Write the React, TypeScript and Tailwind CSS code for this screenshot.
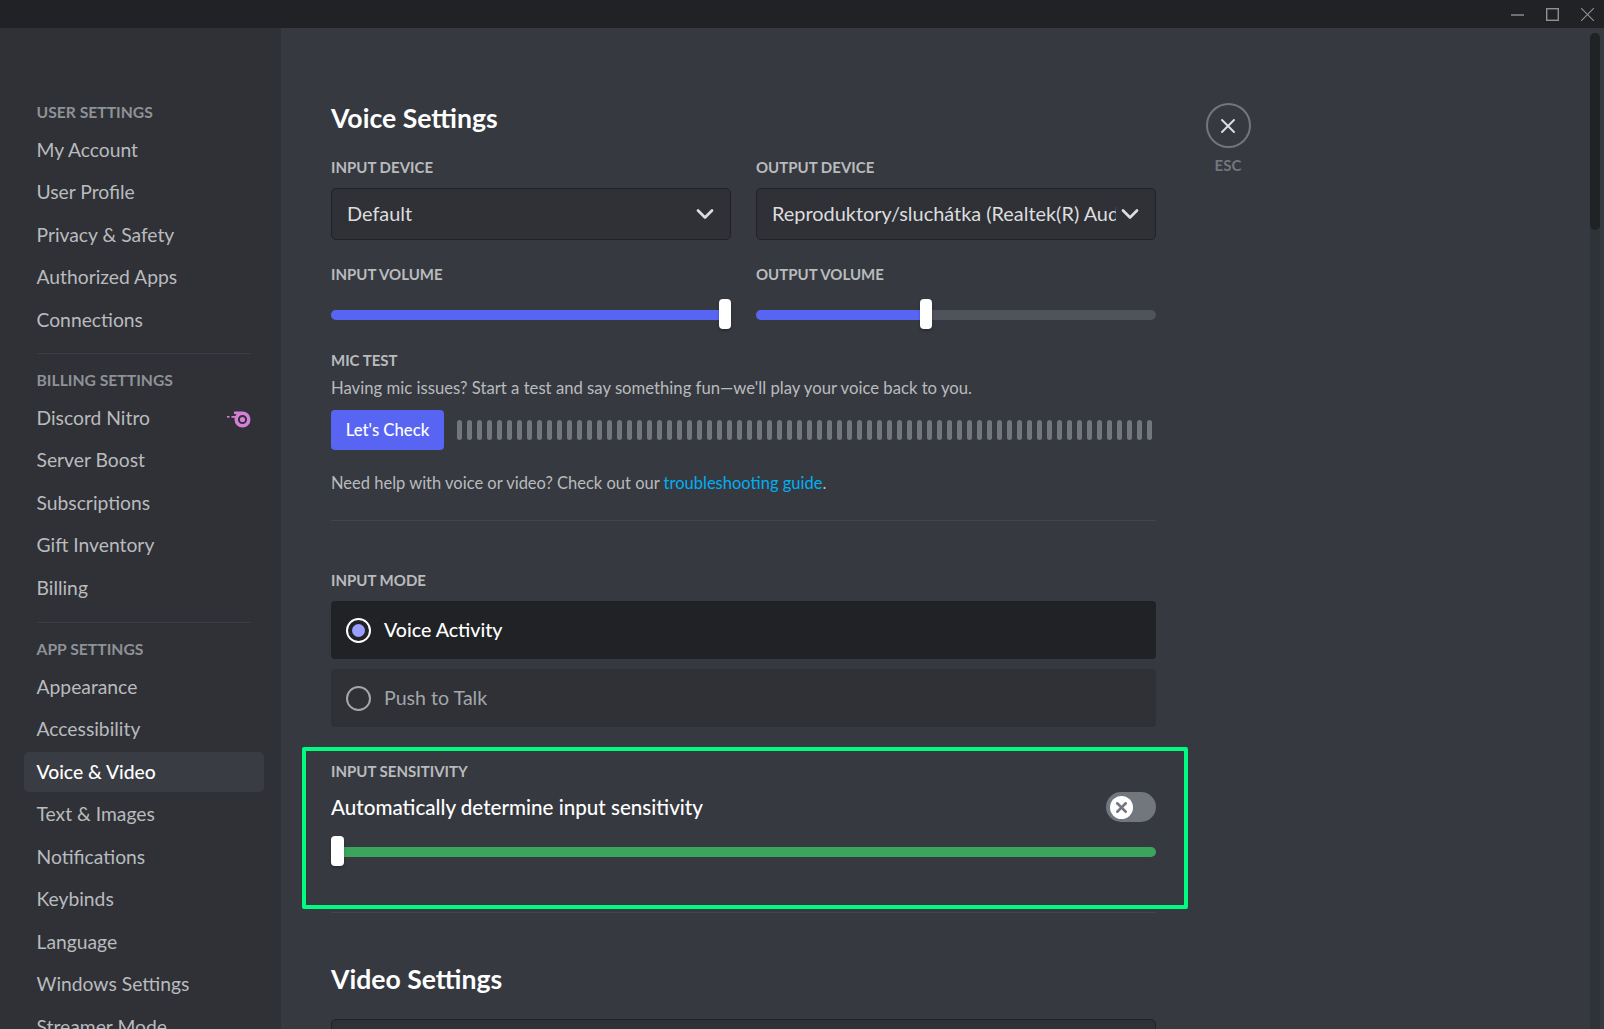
import { X, ChevronDown } from "lucide-react";

const userItems = ["My Account", "User Profile", "Privacy & Safety", "Authorized Apps", "Connections"];
const billingItems = ["Discord Nitro", "Server Boost", "Subscriptions", "Gift Inventory", "Billing"];
const appItems = [
  "Appearance",
  "Accessibility",
  "Voice & Video",
  "Text & Images",
  "Notifications",
  "Keybinds",
  "Language",
  "Windows Settings",
  "Streamer Mode",
];

function NitroIcon() {
  return (
    <svg width="24" height="17" viewBox="0 0 24 17" fill="none" className="mt-0.5 mr-px">
      <path d="M7 0.5H15.5a8 8 0 1 1-8 8c0-.6.1-1.2.2-1.8H4.5V5H8.4c.3-.7.7-1.3 1.2-1.9H7z" fill="#d67fd8" />
      <rect x="0" y="5" width="2.5" height="1.6" fill="#d67fd8" />
      <circle cx="15.5" cy="8.5" r="3.6" stroke="#2f3136" strokeWidth="2" />
    </svg>
  );
}

function SideHeader({ children }: { children: string }) {
  return (
    <div className="h-5 px-[12.5px] text-[15.7px] leading-5 font-bold uppercase text-[#8e9297]">{children}</div>
  );
}

function SideItem({ label }: { label: string }) {
  const active = label === "Voice & Video";
  return (
    <div
      className={
        active
          ? "mb-[2.5px] flex h-10 items-center justify-between rounded-[5px] bg-[#393c43] px-[12.5px] text-[19.3px] font-medium text-white"
          : "mb-[2.5px] flex h-10 items-center justify-between rounded-[5px] px-[12.5px] text-[19.3px] text-[#b9bbbe]"
      }
    >
      <span className="whitespace-nowrap">{label}</span>
      {label === "Discord Nitro" && <NitroIcon />}
    </div>
  );
}

function Label({ children, className }: { children: string; className?: string }) {
  return (
    <div className={`h-5 text-[15px] leading-5 font-bold uppercase text-[#b9bbbe] ${className ?? ""}`}>
      {children}
    </div>
  );
}

function Select({ value, className }: { value: string; className?: string }) {
  return (
    <div
      className={`flex h-[52px] items-center rounded-[5px] border border-[#202225] bg-[#2f3136] pr-[11px] pl-[15px] ${className ?? ""}`}
    >
      <span className="min-w-0 flex-1 overflow-hidden text-[19.9px] whitespace-nowrap text-[#dcddde]">{value}</span>
      <ChevronDown size={28} strokeWidth={2.3} className="shrink-0 text-[#dcddde]" />
    </div>
  );
}

function VolumeSlider({ percent }: { percent: number }) {
  return (
    <div className="relative h-[30px]">
      <div className="absolute top-[11px] right-0 left-0 h-2.5 rounded-[5px] bg-[#4f545c]">
        <div className="h-full rounded-[5px] bg-[#5865f2]" style={{ width: `${percent}%` }} />
      </div>
      <div
        className="absolute top-0 h-[30px] w-3 -translate-x-full rounded-[4px] bg-white shadow-[0_2px_3px_rgba(0,0,0,0.25)]"
        style={{ left: `calc(${percent}% + ${percent < 100 ? 6 : 0}px)` }}
      />
    </div>
  );
}

function Radio({ label, selected, className }: { label: string; selected?: boolean; className?: string }) {
  return (
    <div
      className={`flex h-[58px] items-center rounded-[4px] pl-[15px] text-[19.6px] ${
        selected ? "bg-[#202225] font-medium text-white" : "bg-[#2f3136] text-[#a3a6aa]"
      } ${className ?? ""}`}
    >
      <span
        className={`mr-[13px] flex h-[25px] w-[25px] items-center justify-center rounded-full border-[2.5px] ${
          selected ? "border-white" : "border-[#a3a6aa]"
        }`}
      >
        {selected && <span className="h-[13px] w-[13px] rounded-full bg-[#9a9fff]" />}
      </span>
      {label}
    </div>
  );
}

function Sidebar() {
  return (
    <aside className="h-full w-[281px] shrink-0 overflow-hidden bg-[#2f3136] pt-[74px] pr-[17px] pl-6">
      <SideHeader>User Settings</SideHeader>
      <div className="mt-2">
        {userItems.map((l) => (
          <SideItem key={l} label={l} />
        ))}
      </div>
      <div className="mx-[13px] mt-[13px] h-px bg-[#3a3d43]" />
      <div className="mt-[16px]">
        <SideHeader>Billing Settings</SideHeader>
      </div>
      <div className="mt-2">
        {billingItems.map((l) => (
          <SideItem key={l} label={l} />
        ))}
      </div>
      <div className="mx-[13px] mt-[14px] h-px bg-[#3a3d43]" />
      <div className="mt-[16px]">
        <SideHeader>App Settings</SideHeader>
      </div>
      <div className="mt-2">
        {appItems.map((l) => (
          <SideItem key={l} label={l} />
        ))}
      </div>
    </aside>
  );
}

function Content() {
  return (
    <div className="w-[825px] shrink-0 pt-[74px]">
      <h2 className="h-8 text-[26.6px] leading-8 font-bold text-white">Voice Settings</h2>

      <div className="mt-[23px] grid grid-cols-2 gap-x-[25px]">
        <div>
          <Label>Input Device</Label>
          <Select value="Default" className="mt-[11px]" />
          <Label className="mt-6">Input Volume</Label>
          <div className="mt-[15px]">
            <VolumeSlider percent={100} />
          </div>
        </div>
        <div>
          <Label>Output Device</Label>
          <Select value="Reproduktory/sluchátka (Realtek(R) Audio)" className="mt-[11px]" />
          <Label className="mt-6">Output Volume</Label>
          <div className="mt-[15px]">
            <VolumeSlider percent={42.5} />
          </div>
        </div>
      </div>

      <Label className="mt-[21px]">Mic Test</Label>
      <p className="mt-1.5 h-6 text-[16.7px] leading-6 text-[#b9bbbe]">
        Having mic issues? Start a test and say something fun—we'll play your voice back to you.
      </p>
      <div className="mt-2.5 flex h-10 items-center">
        <button className="h-10 w-[113px] shrink-0 rounded-[4px] bg-[#5865f2] pt-px text-[16.7px] font-medium text-white">
          Let's Check
        </button>
        <div className="ml-[12.5px] flex gap-[5px]">
          {Array.from({ length: 70 }).map((_, i) => (
            <div key={i} className="h-5 w-[5px] rounded-[3px] bg-[#72767d]" />
          ))}
        </div>
      </div>
      <p className="mt-[21px] h-6 text-[16.5px] leading-6 text-[#b9bbbe]">
        Need help with voice or video? Check out our <span className="text-[#00aff4]">troubleshooting guide</span>.
      </p>
      <div className="mt-[25px] h-px bg-[#42454b]" />

      <Label className="mt-[49px]">Input Mode</Label>
      <Radio label="Voice Activity" selected className="mt-[11px]" />
      <Radio label="Push to Talk" className="mt-2.5" />

      <Label className="mt-[34px]">Input Sensitivity</Label>
      <div className="mt-[11px] flex h-[30px] items-center justify-between">
        <span className="text-[20.6px] font-medium text-white">Automatically determine input sensitivity</span>
        <div className="flex h-[30px] w-[50px] items-center rounded-full bg-[#72767d] pl-1">
          <div className="flex h-[23px] w-[23px] items-center justify-center rounded-full bg-white">
            <X size={17} strokeWidth={3.5} className="text-[#72767d]" />
          </div>
        </div>
      </div>
      <div className="relative mt-3.5 h-[30px]">
        <div className="absolute top-[11px] right-0 left-0 h-2.5 rounded-[5px] bg-[#3ba55d]" />
        <div className="absolute top-0 left-0 h-[30px] w-[13px] rounded-[4px] bg-white shadow-[0_2px_3px_rgba(0,0,0,0.25)]" />
      </div>
      <div className="mt-[46px] h-px bg-[#42454b]" />

      <h2 className="mt-[50px] h-8 text-[26.6px] leading-8 font-bold text-white">Video Settings</h2>
      <div className="mt-6 h-[52px] rounded-[5px] border border-[#202225] bg-[#2f3136]" />
    </div>
  );
}

function CloseButton() {
  return (
    <div className="ml-[49px] flex w-[46px] shrink-0 flex-col items-center pt-[75px]">
      <div className="flex h-[45px] w-[45px] items-center justify-center rounded-full border-2 border-[#72767d]">
        <X size={24} strokeWidth={2} className="text-[#dcddde]" />
      </div>
      <span className="mt-[7px] text-[15px] leading-5 font-bold text-[#72767d]">ESC</span>
    </div>
  );
}

function TitleBar() {
  return (
    <div className="flex h-7 shrink-0 items-center justify-end bg-[#202225]">
      <svg width="13" height="13" viewBox="0 0 13 13" className="mr-[22px]">
        <path d="M0 7h13" stroke="#8e9297" strokeWidth="1.4" />
      </svg>
      <svg width="13" height="13" viewBox="0 0 13 13" className="mr-[22px]">
        <rect x="0.7" y="0.7" width="11.6" height="11.6" fill="none" stroke="#8e9297" strokeWidth="1.4" />
      </svg>
      <svg width="13" height="13" viewBox="0 0 13 13" className="mr-2.5">
        <path d="M0 0l13 13M13 0L0 13" stroke="#8e9297" strokeWidth="1.1" />
      </svg>
    </div>
  );
}

export default function App() {
  return (
    <div className="flex h-[1029px] w-[1604px] flex-col overflow-hidden bg-[#36393f] font-['Lato','Liberation_Sans',sans-serif]">
      <TitleBar />
      <div className="relative flex min-h-0 flex-1">
        <Sidebar />
        <main className="relative flex min-w-0 flex-1 overflow-hidden pl-[50px]">
          <Content />
          <CloseButton />
        </main>
        {/* highlight drawn over the sensitivity section */}
        <div className="absolute top-[719px] left-[302px] h-[162px] w-[886px] rounded-[2px] border-4 border-[#00fb80]" />
        <div className="absolute top-[5px] right-1 bottom-0 w-2.5 rounded-t-[5px] bg-[#2e3338]">
          <div className="h-[197px] rounded-[5px] bg-[#202225]" />
        </div>
      </div>
    </div>
  );
}
